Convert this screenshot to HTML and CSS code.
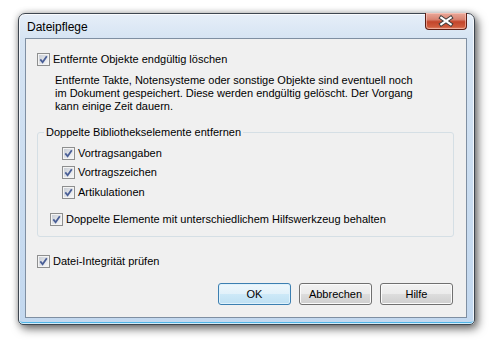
FILE: index.html
```html
<!DOCTYPE html>
<html lang="de">
<head>
<meta charset="utf-8">
<title>Dateipflege</title>
<link rel="stylesheet" href="styles.css">
</head>
<body>
<div class="window">
  <div class="titlebar">
    <span class="title">Dateipflege</span>
    <div class="close">
      <svg width="42" height="16" viewBox="0 0 42 16">
        <path d="M16 4.5 L26 11.5 M26 4.5 L16 11.5" stroke="#3b3b3b" stroke-width="4.2" stroke-linecap="square" fill="none"/>
        <path d="M16 4.5 L26 11.5 M26 4.5 L16 11.5" stroke="#ffffff" stroke-width="2.2" stroke-linecap="square" fill="none"/>
      </svg>
    </div>
  </div>
  <div class="client">
    <div class="check row1">
      <svg class="cb" width="13" height="13" viewBox="0 0 13 13"><defs><linearGradient id="g1" x1="0" y1="0" x2="1" y2="1"><stop offset="0" stop-color="#c9ced6"/><stop offset="1" stop-color="#f7f7f7"/></linearGradient></defs><rect x="0.5" y="0.5" width="12" height="12" fill="#f4f4f4" stroke="#8e8f8f"/><rect x="2" y="2" width="9" height="9" fill="url(#g1)"/><path d="M3.3 6.4 L5.6 9.2 L9.8 3.2" stroke="#4a5f97" stroke-width="1.8" fill="none"/></svg>
      <span>Entfernte Objekte endgültig löschen</span>
    </div>
    <p class="desc">Entfernte Takte, Notensysteme oder sonstige Objekte sind eventuell noch<br>im Dokument gespeichert. Diese werden endgültig gelöscht. Der Vorgang<br>kann einige Zeit dauern.</p>
    <fieldset class="group">
      <legend>Doppelte Bibliothekselemente entfernen</legend>
      <div class="check sub first">
        <svg class="cb" width="13" height="13" viewBox="0 0 13 13"><rect x="0.5" y="0.5" width="12" height="12" fill="#f4f4f4" stroke="#8e8f8f"/><rect x="2" y="2" width="9" height="9" fill="url(#g1)"/><path d="M3.3 6.4 L5.6 9.2 L9.8 3.2" stroke="#4a5f97" stroke-width="1.8" fill="none"/></svg>
        <span>Vortragsangaben</span>
      </div>
      <div class="check sub second">
        <svg class="cb" width="13" height="13" viewBox="0 0 13 13"><rect x="0.5" y="0.5" width="12" height="12" fill="#f4f4f4" stroke="#8e8f8f"/><rect x="2" y="2" width="9" height="9" fill="url(#g1)"/><path d="M3.3 6.4 L5.6 9.2 L9.8 3.2" stroke="#4a5f97" stroke-width="1.8" fill="none"/></svg>
        <span>Vortragszeichen</span>
      </div>
      <div class="check sub third">
        <svg class="cb" width="13" height="13" viewBox="0 0 13 13"><rect x="0.5" y="0.5" width="12" height="12" fill="#f4f4f4" stroke="#8e8f8f"/><rect x="2" y="2" width="9" height="9" fill="url(#g1)"/><path d="M3.3 6.4 L5.6 9.2 L9.8 3.2" stroke="#4a5f97" stroke-width="1.8" fill="none"/></svg>
        <span>Artikulationen</span>
      </div>
      <div class="check keep">
        <svg class="cb" width="13" height="13" viewBox="0 0 13 13"><rect x="0.5" y="0.5" width="12" height="12" fill="#f4f4f4" stroke="#8e8f8f"/><rect x="2" y="2" width="9" height="9" fill="url(#g1)"/><path d="M3.3 6.4 L5.6 9.2 L9.8 3.2" stroke="#4a5f97" stroke-width="1.8" fill="none"/></svg>
        <span>Doppelte Elemente mit unterschiedlichem Hilfswerkzeug behalten</span>
      </div>
    </fieldset>
    <div class="check integ">
      <svg class="cb" width="13" height="13" viewBox="0 0 13 13"><rect x="0.5" y="0.5" width="12" height="12" fill="#f4f4f4" stroke="#8e8f8f"/><rect x="2" y="2" width="9" height="9" fill="url(#g1)"/><path d="M3.3 6.4 L5.6 9.2 L9.8 3.2" stroke="#4a5f97" stroke-width="1.8" fill="none"/></svg>
      <span>Datei-Integrität prüfen</span>
    </div>
    <div class="buttons">
      <button class="btn default">OK</button>
      <button class="btn">Abbrechen</button>
      <button class="btn">Hilfe</button>
    </div>
  </div>
</div>
</body>
</html>
```

FILE: styles.css
```css
* { box-sizing: border-box; }
html, body { margin: 0; padding: 0; background: #ffffff; }
body {
  width: 499px;
  height: 349px;
  overflow: hidden;
  font-family: "Liberation Sans", Arial, sans-serif;
  font-size: 11px;
  color: #000;
}
.window {
  margin: 13px 0 0 18px;
  width: 457px;
  height: 312px;
  border: 1px solid #3e4650;
  border-radius: 7px 7px 5px 5px;
  background: linear-gradient(to bottom, #e6eef8 0px, #d6e4f3 24px, #c9dcf0 60%, #c3d8ef 100%);
  box-shadow: inset 0 0 0 1px rgba(255,255,255,0.75), inset 0 -2px 0 #4fb4e6, 3px 4px 10px rgba(0,0,0,0.55), 0 0 6px rgba(0,0,0,0.25);
  display: flex;
  flex-direction: column;
  padding: 0 7px 6px 6px;
}
.titlebar {
  height: 24px;
  display: flex;
  justify-content: space-between;
  align-items: flex-start;
}
.title {
  font-size: 12px;
  line-height: 14px;
  padding: 6px 0 0 2px;
  color: #000;
}
.close {
  width: 42px;
  height: 17px;
  margin-top: -1px;
  border: 1px solid #5d1e14;
  border-top: none;
  border-radius: 0 0 4px 4px;
  background: linear-gradient(to bottom, #e9a899 0%, #d98472 40%, #c3452b 55%, #cf5a3c 85%, #e0866a 100%);
  box-shadow: inset 0 0 0 1px rgba(255,210,200,0.55);
  display: flex;
  align-items: center;
  justify-content: center;
}
.close svg { display: block; }
.client {
  height: 280px;
  border: 1px solid #7f8fa2;
  background: #f0f0f0;
  display: flex;
  flex-direction: column;
  align-items: flex-start;
}
.check {
  display: flex;
  align-items: center;
  height: 13px;
  line-height: 13px;
  white-space: nowrap;
}
.check .cb { display: block; flex: none; margin-right: 3px; }
.row1 { margin: 14px 0 0 11px; }
.desc {
  margin: 8px 0 0 29px;
  line-height: 13px;
  white-space: nowrap;
}
.group {
  margin: 13px 0 0 11px;
  width: 417px;
  padding: 0 0 10px 0;
  border: 1px solid #d5dfe5;
  border-radius: 3px;
  min-inline-size: 0;
}
.group legend {
  margin-left: 6px;
  padding: 0 2px;
  line-height: 13px;
}
.sub { margin-left: 24px; }
.sub.first { margin-top: 8px; }
.sub.second { margin-top: 6px; }
.sub.third { margin-top: 7px; }
.keep { margin: 14px 0 0 12px; }
.integ { margin: 18px 0 0 11px; }
.buttons {
  margin-top: 15px;
  align-self: stretch;
  display: flex;
  justify-content: flex-end;
  gap: 8px;
  padding-right: 13px;
}
.btn {
  width: 73px;
  height: 22px;
  padding: 0;
  font-family: "Liberation Sans", Arial, sans-serif;
  font-size: 11px;
  color: #000;
  border: 1px solid #707070;
  border-radius: 3px;
  background: linear-gradient(to bottom, #f2f2f2 0%, #ebebeb 50%, #dddddd 50%, #cfcfcf 100%);
  box-shadow: inset 0 0 0 1px #fbfbfb;
}
.btn.default {
  border-color: #3c7fb1;
  background: linear-gradient(to bottom, #eef7fc 0%, #e1f1fa 50%, #cde9f8 50%, #bfe0f3 100%);
  box-shadow: inset 0 0 0 1px #dff2fc;
}
```
